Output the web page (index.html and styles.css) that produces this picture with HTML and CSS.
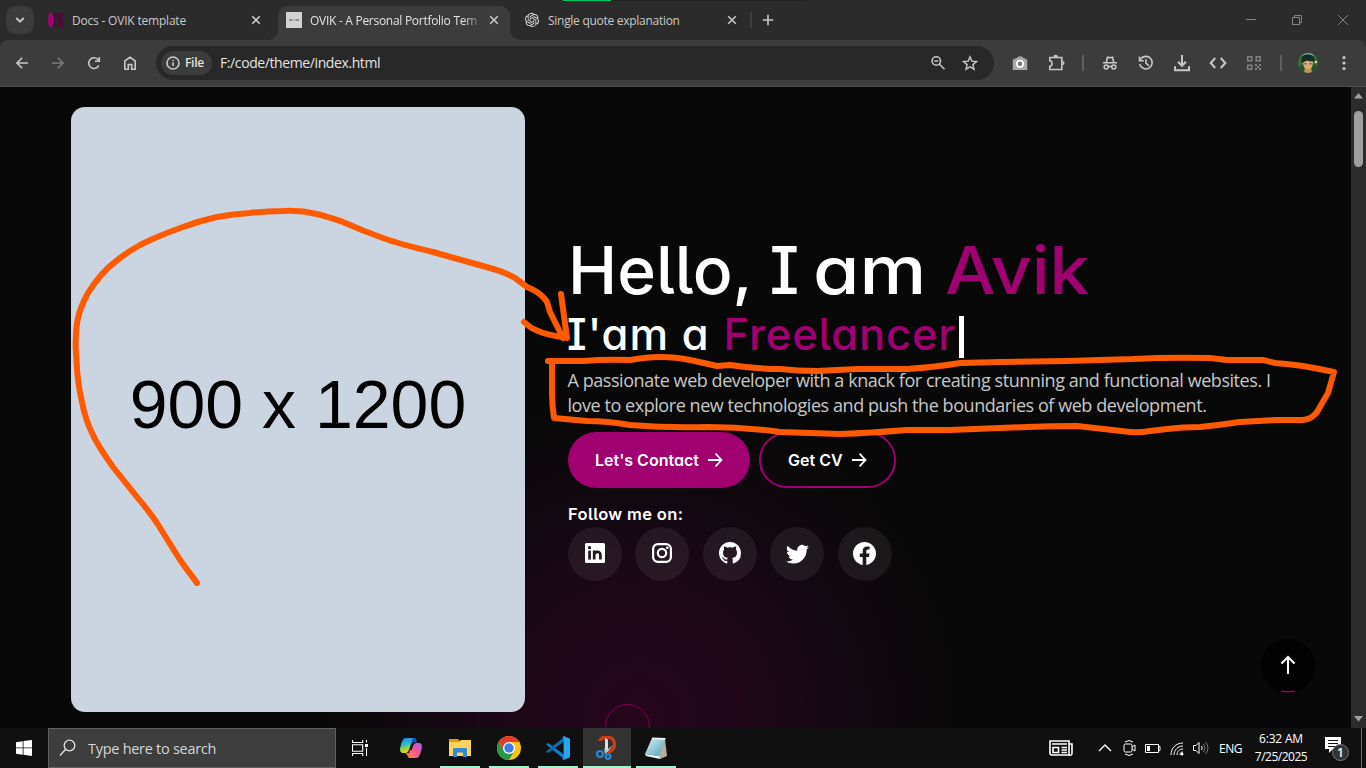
FILE: index.html
```html
<!DOCTYPE html>
<html lang="en">
<head>
<meta charset="utf-8">
<title>OVIK - A Personal Portfolio Template</title>
<link rel="stylesheet" href="styles.css">
</head>
<body>
<div class="screen">
  <header class="tabstrip">
    <button class="tab-search"><svg width="10" height="8" viewBox="0 0 10 8"><path class="ln2" d="M1.2 2 5 5.7 8.8 2"/></svg></button>
    <div class="tab tab-docs">
      <svg class="fav" width="16" height="16" viewBox="0 0 16 16"><ellipse cx="2.6" cy="8" rx="2.5" ry="7.8" fill="#a80074"/><path d="M5.6.5 7 14.500 8.300.5M10 .5v15M12.300.5v15M15.300.5l-2.300 7 2.300 8" fill="none" stroke="#4d0838" stroke-width="1.400"/></svg>
      <span class="tab-title t1">Docs - OVIK template</span>
      <svg class="x" width="10" height="10" viewBox="0 0 10 10"><path class="ln15" d="m1.2 1.2 7.6 7.6m0-7.6L1.2 8.8"/></svg>
    </div>
    <div class="tab tab-active">
      <svg class="fav" width="16" height="16" viewBox="0 0 16 16"><path fill="#d2d2d2" d="M0 0h16v16H0z"/><path d="M3 8h3.500m3 0H13" stroke="#777" stroke-width="1.600"/><path d="M7.300 8h1.400" stroke="#888"/></svg>
      <span class="tab-title t2">OVIK - A Personal Portfolio Tem</span>
      <svg class="x" width="10" height="10" viewBox="0 0 10 10"><path class="ln15" d="m1.2 1.2 7.6 7.6m0-7.6L1.2 8.8"/></svg>
    </div>
    <div class="tab tab-gpt">
      <svg class="fav" width="16" height="16" viewBox="-1.500 -1.500 27 27"><path fill="#dadada" d="M22.2819 9.8211a5.9847 5.9847 0 0 0-.5157-4.9108 6.0462 6.0462 0 0 0-6.5098-2.9A6.0651 6.0651 0 0 0 4.9807 4.1818a5.9847 5.9847 0 0 0-3.9977 2.9 6.0462 6.0462 0 0 0 .7427 7.0966 5.98 5.98 0 0 0 .511 4.9107 6.051 6.051 0 0 0 6.5146 2.9001A5.9847 5.9847 0 0 0 13.2599 24a6.0557 6.0557 0 0 0 5.7718-4.2058 5.9894 5.9894 0 0 0 3.9977-2.9001 6.0557 6.0557 0 0 0-.7475-7.0729zm-9.022 12.6081a4.4755 4.4755 0 0 1-2.8764-1.0408l.1419-.0804 4.7783-2.7582a.7948.7948 0 0 0 .3927-.6813v-6.7369l2.02 1.1686a.071.071 0 0 1 .038.052v5.5826a4.504 4.504 0 0 1-4.4945 4.4944zm-9.6607-4.1254a4.4708 4.4708 0 0 1-.5346-3.0137l.142.0852 4.783 2.7582a.7712.7712 0 0 0 .7806 0l5.8428-3.3685v2.3324a.0804.0804 0 0 1-.0332.0615L9.74 19.9502a4.4992 4.4992 0 0 1-6.1408-1.6464zM2.3408 7.8956a4.485 4.485 0 0 1 2.3655-1.9728V11.6a.7664.7664 0 0 0 .3879.6765l5.8144 3.3543-2.0201 1.1685a.0757.0757 0 0 1-.071 0l-4.8303-2.7865A4.504 4.504 0 0 1 2.3408 7.872zm16.5963 3.8558L13.1038 8.364 15.1192 7.2a.0757.0757 0 0 1 .071 0l4.8303 2.7913a4.4944 4.4944 0 0 1-.6765 8.1042v-5.6772a.79.79 0 0 0-.407-.667zm2.0107-3.0231l-.142-.0852-4.7735-2.7818a.7759.7759 0 0 0-.7854 0L9.409 9.2297V6.8974a.0662.0662 0 0 1 .0284-.0615l4.8303-2.7866a4.4992 4.4992 0 0 1 6.6802 4.66zM8.3065 12.863l-2.02-1.1638a.0804.0804 0 0 1-.038-.0567V6.0742a4.4992 4.4992 0 0 1 7.3757-3.4537l-.142.0805L8.704 5.459a.7948.7948 0 0 0-.3927.6813zm1.0976-2.3654l2.602-1.4998 2.6069 1.4998v2.9994l-2.5974 1.4997-2.6067-1.4997Z"/></svg>
      <span class="tab-title t3">Single quote explanation</span>
      <svg class="x" width="10" height="10" viewBox="0 0 10 10"><path class="ln15" d="m1.200 1.200 7.600 7.600m0-7.600L1.200 8.800"/></svg>
    </div>
    <i class="tab-sep"></i>
    <svg class="plus" width="12" height="12" viewBox="0 0 12 12"><path class="ln15" d="M6 .8v10.400M.8 6h10.400"/></svg>
    <div class="winctl">
      <svg width="46" height="40"><path d="M18 19.500h10"/></svg>
      <svg width="46" height="40"><path d="M18.500 17.500h7v7h-7zM20.500 17.500v-2h7v7h-2"/></svg>
      <svg width="46" height="40"><path d="m18 15 10 10m0-10L18 25"/></svg>
    </div>
    <i class="top-line"></i>
  </header>

  <nav class="toolbar">
    <span class="slot"><svg width="12" height="12" viewBox="0 0 12 12"><path class="ln" d="M12 6H1.200M6.200.8 1 6l5.200 5.200"/></svg></span>
    <span class="slot dim"><svg width="12" height="12" viewBox="0 0 12 12"><path class="ln" d="M0 6h10.800M5.800.8 11 6l-5.200 5.200"/></svg></span>
    <span class="slot"><svg width="16" height="16" viewBox="0 0 16 16"><path class="ln" d="M12.800 10.400A5.300 5.300 0 1 1 11.900 4.500L13.200 6"/><path class="ln" d="M13.300 2v4.300H9"/></svg></span>
    <span class="slot"><svg width="16" height="16" viewBox="0 0 16 16"><path class="ln" d="M2.800 14.200V6L8 2.200 13.200 6v8.200H9.700V9.500H6.300v4.700z"/></svg></span>
    <div class="omnibox">
      <span class="chip"><svg width="14" height="14" viewBox="0 0 14 14"><circle class="ln" cx="7" cy="7" r="6"/><path class="ln" d="M7 6.300V10M7 3.800v1.300"/></svg><b>File</b></span>
      <span class="url">F:/code/theme/index.html</span>
      <span class="omni-icons">
        <svg width="16" height="16" viewBox="0 0 16 16"><circle class="ln" cx="6.300" cy="6" r="4.200"/><path class="ln" d="M9.500 9.300 14.500 14.300M4.300 6h4"/></svg>
        <svg width="16" height="16" viewBox="0 0 16 16"><path class="ln13" d="m8 1.800 1.800 4.300 4.700.4-3.600 3.100 1.100 4.600L8 11.800l-4 2.400 1.100-4.600-3.600-3.100 4.700-.4z"/></svg>
      </span>
    </div>
    <div class="actions">
      <span class="slot"><svg width="16" height="16" viewBox="0 0 16 16"><path fill="#a8a8a8" d="M1 4.200h2.200V3h2l1-1.600h4L11.300 3H13v1.200h2.200V15H.8V4.200z"/><circle cx="8" cy="8.800" r="3.200" fill="#777" stroke="#fff" stroke-width="1.700"/></svg></span>
      <span class="slot"><svg width="18" height="18" viewBox="0 0 18 18"><path class="ln" d="M2.800 3.500h12v12h-12v-3.200c3-.3 3-5.300 0-5.600z"/><path class="fl" d="M6.500 3a2.200 2.200 0 0 1 4.400 0zM15.500 7a2 2 0 0 1 0 4.200z"/></svg></span>
      <i class="tb-sep"></i>
      <span class="slot"><svg width="16" height="16" viewBox="0 0 16 16"><path class="ln" d="M4.300 7 5.500 2.200l2.500.6 2.500-.6L11.700 7M1 7.800h14"/><circle class="ln" cx="4.200" cy="12" r="2"/><circle class="ln" cx="11.800" cy="12" r="2"/><path class="ln" d="M6.200 11.500h3.600"/></svg></span>
      <span class="slot"><svg width="16" height="16" viewBox="0 0 16 16"><path class="ln" d="M1.700 9a6.300 6.300 0 1 0 1-5L1.500 5.500"/><path class="ln" d="M1.500 1.500v4.300h4.300M8 4.300v4l3 2.300"/></svg></span>
      <span class="slot"><svg width="18" height="18" viewBox="0 0 18 18"><path class="ln2" d="M9 1v10.500M5 7.800l4 4 4-4M2 12.300v4h14v-4"/></svg></span>
      <span class="slot"><svg width="18" height="14" viewBox="0 0 18 14"><path class="ln2" d="M6.200 2 1.700 7l4.500 5M11.800 2l4.500 5-4.500 5"/></svg></span>
      <span class="slot"><svg width="16" height="16" viewBox="0 0 16 16"><path fill="none" stroke="#818181" stroke-width="1.500" d="M1.700 1.700h4v4h-4zM10.200 1.700h4v4h-4zM1.700 10.200h4v4h-4z"/><path fill="#818181" d="M9 9h2v2H9zM11 11h2v2h-2zM13 9h2v2h-2zM9 13h2v2H9zM13 13h2v2h-2z"/></svg></span>
      <i class="tb-sep"></i>
      <span class="slot"><svg width="20" height="20" viewBox="0 0 20 20"><defs><clipPath id="av"><circle cx="10" cy="10" r="10"/></clipPath></defs><g clip-path="url(#av)"><path fill="#3c7036" d="M0 0h20v20H0z"/><path fill="#78a8ac" d="M0 0h20v2.500H0z"/><path fill="#20562f" d="M0 14l5-3 3 9H0zM20 13l-5-2-2 9h7z"/><path fill="#c98f5c" d="M7 14h6l1 6H6z"/><ellipse cx="10" cy="10.500" rx="4.800" ry="5.600" fill="#dfab78"/><path fill="#152d27" d="M3.500 9.500C2.500 3 6 1.500 10 1.500s7.500 2 6.500 8L14.800 8 12 8.500l-3-1-4 2z"/><path stroke="#52301f" d="M6.500 10.800h2M11.500 10.800h2"/><circle cx="17.800" cy="9" r="1.300" fill="#e3d8a7"/></g></svg></span>
      <span class="slot"><svg width="4" height="16" viewBox="0 0 4 16"><circle class="fl" cx="2" cy="2.500" r="1.600"/><circle class="fl" cx="2" cy="8" r="1.600"/><circle class="fl" cx="2" cy="13.500" r="1.600"/></svg></span>
    </div>
  </nav>

  <div class="viewport">
    <main class="hero">
      <div class="photo">900 x 1200</div>
      <section class="intro">
        <h1><span>Hello,</span> <span>I</span> <span class="h1c">am</span> <span class="h1d pink">Avik</span></h1>
        <h2><span class="h2a">I'am a</span> <span class="pink h2b">Freelancer</span><i class="caret"></i></h2>
        <p class="bio">A passionate web developer with a knack for creating stunning and functional websites. I<br>love to explore new technologies and push the boundaries of web development.</p>
        <div class="buttons">
          <a class="btn primary"><span>Let's Contact</span><svg width="16" height="16" viewBox="0 0 16 16"><path d="M1 8h13M8.500 1.700 14.500 8l-6 6.300"/></svg></a>
          <a class="btn outline"><span>Get CV</span><svg width="16" height="16" viewBox="0 0 16 16"><path d="M1 8h13M8.500 1.700 14.500 8l-6 6.300"/></svg></a>
        </div>
        <div class="follow">Follow me on:</div>
        <div class="socials">
          <a><svg width="20" height="20" viewBox="0 0 20 20"><rect width="20" height="20" rx="1.500" fill="#fff"/><path fill="#24161f" d="M3.200 7.600h2.700v9H3.200z"/><circle cx="4.550" cy="4.700" r="1.650" fill="#24161f"/><path fill="none" stroke="#24161f" stroke-width="2.700" d="M9.200 7.600v9M9.200 12c0-3.800 6.200-4.500 6.200 0v4.600"/></svg></a>
          <a><svg width="20" height="20" viewBox="0 0 20 20"><g fill="none" stroke="#fff" stroke-width="2.200"><rect x="1.100" y="1.100" width="17.800" height="17.800" rx="4.800"/><circle cx="10" cy="10" r="4.200"/></g><circle cx="15.300" cy="4.700" r="1.300" fill="#fff"/></svg></a>
          <a><svg width="22" height="22" viewBox="0 0 16 16"><path fill="#fff" d="M8 0C3.580 0 0 3.580 0 8c0 3.540 2.290 6.530 5.470 7.590.4.070.55-.17.55-.38 0-.19-.01-.82-.01-1.490-2.010.37-2.530-.49-2.690-.94-.09-.23-.48-.94-.82-1.130-.28-.15-.68-.52-.01-.53.63-.01 1.080.58 1.230.82.72 1.210 1.870.87 2.330.66.070-.52.28-.87.51-1.070-1.780-.2-3.640-.89-3.640-3.950 0-.87.31-1.590.82-2.150-.08-.2-.36-1.020.08-2.120 0 0 .67-.21 2.200.82.64-.18 1.320-.27 2-.27s1.360.09 2 .27c1.530-1.040 2.200-.82 2.200-.82.44 1.100.16 1.920.08 2.120.51.56.82 1.270.82 2.150 0 3.070-1.870 3.750-3.650 3.950.29.25.54.73.54 1.480 0 1.070-.01 1.930-.01 2.200 0 .21.15.46.55.38A8.010 8.010 0 0 0 16 8c0-4.420-3.580-8-8-8z"/></svg></a>
          <a><svg width="23" height="23" viewBox="0 0 16 16"><path fill="#fff" d="M5.026 15c6.038 0 9.341-5.003 9.341-9.334 0-.14 0-.282-.006-.422A6.685 6.685 0 0 0 16 3.542a6.658 6.658 0 0 1-1.889.518 3.301 3.301 0 0 0 1.447-1.817 6.533 6.533 0 0 1-2.087.793A3.286 3.286 0 0 0 7.875 6.030a9.325 9.325 0 0 1-6.767-3.429 3.289 3.289 0 0 0 1.018 4.382A3.323 3.323 0 0 1 .64 6.575v.045a3.288 3.288 0 0 0 2.632 3.218 3.203 3.203 0 0 1-.865.115 3.230 3.230 0 0 1-.614-.057 3.283 3.283 0 0 0 3.067 2.277A6.588 6.588 0 0 1 .78 13.580a6.320 6.320 0 0 1-.78-.045A9.344 9.344 0 0 0 5.026 15z"/></svg></a>
          <a><svg width="23" height="23" viewBox="0 0 16 16"><path fill="#fff" d="M16 8.049c0-4.446-3.582-8.050-8-8.050C3.580 0-.002 3.603-.002 8.050c0 4.017 2.926 7.347 6.750 7.951v-5.625h-2.030V8.050H6.750V6.275c0-2.017 1.195-3.131 3.022-3.131.876 0 1.791.157 1.791.157v1.980h-1.009c-.993 0-1.303.621-1.303 1.258v1.510h2.218l-.354 2.326H9.250V16c3.824-.604 6.750-3.934 6.750-7.951z"/></svg></a>
        </div>
      </section>
      <i class="ring"></i>
      <a class="to-top"><svg width="54" height="54" viewBox="0 0 54 54"><path d="M27 35V19M20.500 24.500 27 18l6.500 6.500" fill="none" stroke="#fff" stroke-width="2"/><path d="M20 52.200q7 1 14 0" fill="none" stroke="#a00070" stroke-width="1.200"/></svg></a>
    </main>
    <aside class="scrollbar">
      <svg width="15" height="24"><path fill="#a0a0a0" d="M3 11.500 7.500 6 12 11.500z"/></svg>
      <i class="thumb"></i>
      <svg class="down" width="15" height="20"><path fill="#a0a0a0" d="M3 8 7.500 13.500 12 8z"/></svg>
    </aside>
  </div>

  <footer class="taskbar">
    <span class="start"><svg width="16" height="16" viewBox="0 0 16 16"><path fill="#fff" d="M0 2.200 6.700 1.200v6.300H0zM7.500 1.100 16 0v7.500H7.500zM0 8.300h6.700v6.400L0 13.700zM7.500 8.300H16V16l-8.500-1.200z"/></svg></span>
    <div class="search"><svg width="18" height="18" viewBox="0 0 18 18"><circle cx="10.500" cy="6.500" r="5.300"/><path d="M6.700 10.300 1 16.500"/></svg><span>Type here to search</span></div>
    <span class="start"><svg width="16" height="16" viewBox="0 0 16 16" fill="none" stroke="#fff" stroke-width="1.100"><path d="M.5 0v2.500h10.200V0M.5 16v-2.500h10.200V16M.5 4.800h10.200v6.400H.5zM14.500 0v2.500M14.500 8v8"/><path fill="#fff" stroke="none" d="M13 4h3v3h-3z"/></svg></span>
    <div class="apps">
      <span class="app"><svg width="24" height="24" viewBox="0 0 24 24"><defs><linearGradient id="c1" x2="0.300" y2="1"><stop stop-color="#1788e8"/><stop offset=".45" stop-color="#28b4d8"/><stop offset=".7" stop-color="#8bd13f"/><stop offset="1" stop-color="#f4d12a"/></linearGradient><linearGradient id="c2" x1="1" x2="0" y2="1"><stop stop-color="#a65cf2"/><stop offset=".5" stop-color="#f0588f"/><stop offset="1" stop-color="#ff8b42"/></linearGradient></defs><path fill="#1653ba" d="M12 2h3.500c1.700 0 2 2 2.500 4.500h-4L11 11z"/><path fill="url(#c1)" d="M7 2h8c-2 .5-2.500 3-3.500 7-1 4-2 8-5 8H4c-3 0-3.500-3-2.500-6.500C3 5 4 2 7 2z"/><path fill="#ff7053" d="M6 17c2 0 2.500 5 5 5h3l1-7-4-1-1 3z"/><path fill="url(#c2)" d="M17 22H9c2-.5 2.500-3 3.500-7 1-4 2-8 5-8H20c3 0 3.500 3 2.500 6.500C21 19 20 22 17 22z"/></svg></span>
      <span class="app run"><svg width="24" height="24" viewBox="0 0 24 24"><path fill="#e59b00" d="M1 3h9l2 2v4H1z"/><path fill="#ffd35c" d="M1 6h10l2-2h10v16H1z"/><path fill="#318bd3" d="M5 21v-8.500L6.500 12h11l1.500.5V21h-4v-4.500H9V21z"/></svg></span>
      <span class="app run"><svg width="24" height="24" viewBox="0 0 24 24"><circle cx="12" cy="12" r="12" fill="#fbc116"/><path fill="#e33b2e" d="M1.600 6A12 12 0 0 1 22.400 6H12L6.800 15z"/><path fill="#249a49" d="M1.600 6A12 12 0 0 0 12 24l5.200-9-5.200 3-5.200-3z"/><circle cx="12" cy="12" r="6" fill="#fff"/><circle cx="12" cy="12" r="4.700" fill="#3c7bea"/></svg></span>
      <span class="app run"><svg width="24" height="24" viewBox="0 0 24 24"><path fill="#0780cc" d="M0 8.500 2 7l16 11.500v4.500z"/><path fill="#086eaf" d="M0 15.500 2 17 18 5.500V1z"/><path fill="#27a7ee" d="M17.500 0 24 2.800v18.400L17.500 24 16 22.500c.8.500 1.600 0 1.600-1V2.500c0-1-.8-1.500-1.600-1z"/></svg></span>
      <span class="app run active"><svg width="24" height="24" viewBox="0 0 24 24"><path d="M5 4.500C8-.5 19-.5 19.500 8c.2 5-3.500 8-7 8.500" fill="none" stroke="#cd3c15" stroke-width="3.200"/><path fill="#cd3c15" d="M2.500 5 6.500.5 12 0 9 4z"/><path fill="#ddd" d="m10 2 3 1.500v11l-1.500 2.500-1.500-4zM18 9l-5.500 7-1.500-1z"/><path fill="#b7bec4" d="m9 12 4 3-3 3z"/><g fill="none" stroke="#2589d4" stroke-width="2.200"><circle cx="5" cy="18" r="3"/><circle cx="13" cy="20.500" r="2.400"/></g></svg></span>
      <span class="app run"><svg width="24" height="24" viewBox="0 0 24 24"><defs><linearGradient id="n" x2="1" y2="1"><stop stop-color="#d7f4f7"/><stop offset="1" stop-color="#4fa0b2"/></linearGradient></defs><path fill="#b8aea0" d="m21 3 2 17-7 3-3-4z"/><path fill="url(#n)" d="M8 2h13.500L15 20 1 18z"/><path fill="#e9f4f4" d="m1 18 14 2 1 3-14-3zM8 1.500l13.500.5-.5 2-13-1z"/></svg></span>
    </div>
    <div class="tray">
      <svg class="news" width="24" height="16" viewBox="0 0 24 16"><path d="M1 1h19v14H3a2 2 0 0 1-2-2zM20 4h3v9a2 2 0 0 1-3 2M3 4h15M12.500 7.500H18M12.500 10H18M12.500 12.500H18M4 7.500h5.500v5H4z" stroke-width="1.600"/></svg>
      <svg width="24" height="16" viewBox="0 0 24 16"><path d="m6 11 6-6 6 6" stroke-width="1.400"/></svg>
      <svg width="24" height="18" viewBox="0 0 24 18"><rect x="7" y="5" width="8" height="8" rx="1.500"/><path d="m15 8 3-2v6l-3-2M8 3q4-3 8 0M8 15q4 3 8 0"/></svg>
      <svg width="24" height="16" viewBox="0 0 24 16"><path d="M4.500 4.500h13v8h-13zM18 6.500h1v4h-1"/><path fill="#fff" stroke="none" d="M6 6h3v5H6z"/></svg>
      <svg width="24" height="16" viewBox="0 0 24 16"><path d="M6 15C6 8 11 3 18 3M9 15c0-5 4-9 9-9M12 15c0-3.500 2.500-6 6-6M15 15c0-2 1-3 3-3"/><circle cx="17" cy="14" r="1.500" fill="#fff" stroke="none"/></svg>
      <svg width="24" height="16" viewBox="0 0 24 16"><path d="M4.500 5.500H7l3-3v11l-3-3H4.500zM12.500 6q1.500 2 0 4"/><path d="M14.500 4q3 4 0 8M16.500 2q5 6 0 12" stroke="#777"/></svg>
      <span class="lang">ENG</span>
      <div class="clock"><span class="time">6:32 AM</span><span class="date">7/25/2025</span></div>
      <div class="notice"><svg width="26" height="26" viewBox="0 0 26 26"><path fill="#fff" stroke="none" d="M1 2h16v12H9l-4 4v-4H1z"/><path d="M4 5.500h10M4 8.500h10M4 11.500h7" stroke="#111"/><circle cx="16.500" cy="17.500" r="8" fill="#333" stroke="#777"/></svg><b>1</b></div>
      <i class="show-desk"></i>
    </div>
  </footer>

  <svg class="ink" width="1366" height="768" viewBox="0 0 1366 768">
    <path d="M197 583C190 573 183 565 177 555Q167 539 157 523C147 508 140 501 133 492L113 467C106 457 98 446 93 435C87 423 84 413 82 402C79 389 77 374 76.500 360C76 351 75.500 350 75.700 343C76 333 76 327 78 318C80 309 83 302 88 293C95 282 103 271 115 262C122 256 131 250 140 245Q160 235 183 227Q199 221 217 217Q233 214 250 213Q266 211 283 211Q300 210 317 214C326 216 334 219 343 222Q363 231 383 238C399 244 416 248 433 252L490 268Q505 272 515 278L527 287Q532 289 537 292Q544 297 547 302L550 312L563 338"/>
    <path d="M524 322Q530 328 538 331C547 335 555 336 567 338L561 294"/>
    <path d="M548 361L583 361Q607 359 630 360Q647 357 660 357Q676 357 690 360Q704 363 717 366L730 365Q755 369 780 369Q798 371 817 371Q837 370 857 369L907 369Q937 367 960 363L1000 362L1067 361L1133 359Q1170 357 1210 358L1227 360L1263 360L1275 363Q1289 364 1303 366Q1320 369 1334 372L1328 393L1317 412Q1312 419 1303 420L1277 420L1240 422Q1220 425 1200 427Q1183 427 1167 429L1150 431Q1140 433 1130 432Q1103 429 1077 426Q1051 426 1027 427L950 430L907 430Q870 433 840 434L780 432Q743 427 707 427Q667 428 630 425Q607 421 587 421L554 418Q552 405 552 393L552 362"/>
  </svg>
</div>
</body>
</html>
```
FILE: styles.css
```css
* { box-sizing: border-box; }
body { margin: 0; background: #080808; font-family: "Open Sans", "Noto Sans", sans-serif; color: #e3e3e3; }
i { font-style: normal; }
svg { display: block; flex: none; }
.screen { position: relative; width: 1366px; height: 768px; display: flex; flex-direction: column; overflow: hidden; }

.ln, .ln13, .ln15, .ln2 { fill: none; stroke: #c7c7c7; }
.ln { stroke-width: 1.6; }
.ln13 { stroke-width: 1.4; }
.ln15 { stroke-width: 1.6; }
.ln2 { stroke-width: 2; }
.fl { fill: #c7c7c7; }

.tabstrip { position: relative; height: 40px; background: #2b2b2b; display: flex; align-items: center; padding-left: 6px; }
.tab-search { width: 28px; height: 28px; border: 0; padding: 0; border-radius: 10px; background: #3c3c3c; display: flex; align-items: center; justify-content: center; }
.tab { display: flex; align-items: center; height: 34px; margin-top: 6px; padding-bottom: 6px; }
.tab-title { margin-left: 8px; font-size: 12px; white-space: nowrap; flex: 1; color: #c9c9c9; letter-spacing: -.2px; }
.tab-docs { width: 244px; padding-left: 14px; padding-right: 17px; }
.tab-active { position: relative; width: 232px; padding-left: 8px; padding-right: 11px; background: #3c3c3c; border-radius: 10px 10px 0 0; }
.tab-active::before, .tab-active::after { content: ""; position: absolute; bottom: 0; width: 10px; height: 10px; }
.tab-active::before { left: -10px; background: radial-gradient(circle at 0 0, transparent 9.5px, #3c3c3c 10px); }
.tab-active::after { right: -10px; background: radial-gradient(circle at 100% 0, transparent 9.5px, #3c3c3c 10px); }
.tab-active .tab-title { color: #e3e3e3; letter-spacing: -.28px; -webkit-mask-image: linear-gradient(90deg, #000 154px, transparent 173px); mask-image: linear-gradient(90deg, #000 154px, transparent 173px); }
.tab-gpt { width: 227px; padding-left: 14px; }
.tab-gpt .tab-title { letter-spacing: -.28px; }
.tab-sep { width: 2px; height: 16px; margin-left: 13px; background: #3f3f3f; }
.plus { margin-left: 10px; }
.winctl { margin-left: auto; display: flex; fill: none; stroke: #858585; stroke-width: 1; }
.top-line { position: absolute; left: 563px; top: 0; width: 241px; height: 1px; background: linear-gradient(90deg, #00c864 48px, #202020 48px); }

.toolbar { height: 47px; background: #3c3c3c; display: flex; align-items: center; padding: 0 4px 1px; border-bottom: 1px solid #505050; border-radius: 8px 8px 0 0; }
.screen::before { content: ""; position: absolute; top: 40px; left: 0; width: 100%; height: 20px; background: #2b2b2b; z-index: -1; }
.slot { width: 36px; display: flex; justify-content: center; flex: none; }
.dim { opacity: .45; }
.omnibox { width: 838px; height: 34px; margin-left: 8px; margin-right: 8px; border-radius: 17px; background: #282828; display: flex; align-items: center; padding-left: 5px; }
.chip { width: 51px; height: 24px; border-radius: 12px; background: #3c3c3c; display: flex; align-items: center; padding-left: 5px; gap: 5px; font-size: 12px; }
.chip b { font-weight: 600; letter-spacing: -.3px; }
.url { margin-left: 8px; font-size: 14px; letter-spacing: -.4px; }
.omni-icons { margin-left: auto; display: flex; gap: 16px; padding-right: 16px; }
.actions { display: flex; align-items: center; }
.tb-sep { width: 2px; height: 16px; margin: 0 8px; background: #5f5f5f; }

.viewport { height: 641px; display: flex; }
.hero { position: relative; width: 1351px; overflow: hidden; display: flex; padding: 20px 0 0 71px; background: radial-gradient(circle 345px at 640px 630px, #26061c 0, #200719 28%, #140812 58%, #0a0809 88%, #080808 100%) #080808; }
.photo { width: 454px; height: 605px; border-radius: 14px; background: #cbd5e1; color: #000; display: flex; align-items: center; justify-content: center; font: 68px "Liberation Sans", sans-serif; padding-bottom: 12px; }
.intro { margin-left: 43px; padding-top: 120px; width: 760px; }
h1, h2 { margin: 0; font-family: Inter, sans-serif; font-weight: 500; color: #fff; white-space: nowrap; font-feature-settings: "cv08", "cv11", "cv05"; }
h1 { font-size: 66px; line-height: 86px; }
.h1c, .h1d { display: inline-block; transform-origin: 0 50%; }
.h1c { margin-left: -4px; transform: scaleX(1.14); }
.h1d { margin-left: 15px; transform: scaleX(1.08); }
h2 { font-size: 43.5px; line-height: 54px; height: 50px; margin-top: -6px; display: flex; }
.pink { color: #a00070; }
.h2a { letter-spacing: 1px; margin-left: -1px; }
.h2b { margin-left: 14px; letter-spacing: .85px; }
.caret { width: 5px; height: 42px; margin: 9px 0 0 3px; background: #fff; }
.bio { margin: 11px 0 0 -.5px; font-size: 18px; line-height: 25px; letter-spacing: -.44px; color: #c7c7c7; white-space: nowrap; }
.buttons { display: flex; gap: 9px; margin-top: 14px; }
.btn { height: 56px; border-radius: 28px; display: flex; align-items: center; gap: 8px; color: #fff; font: 600 16px Inter, sans-serif; font-feature-settings: "cv11", "cv05"; }
.btn svg { fill: none; stroke: #fff; stroke-width: 1.8; }
.primary { width: 182px; padding-left: 27px; background: #a00070; }
.outline { width: 137px; padding-left: 27px; border: 2px solid #a00070; }
.follow { margin: 15px 0 1px; height: 23px; font: 600 16.5px/23px Inter, sans-serif; letter-spacing: .35px; color: #fff; font-feature-settings: "cv11", "cv05"; }
.socials { display: flex; gap: 13.4px; }
.socials a { width: 54px; height: 54px; border-radius: 50%; background: rgba(255,255,255,.065); display: flex; align-items: center; justify-content: center; padding-bottom: 2px; }
.ring { position: absolute; left: 605px; top: 617px; width: 45px; height: 45px; border: 1px solid #80005c; border-radius: 50%; }
.to-top { position: absolute; left: 1261px; top: 552px; width: 54px; height: 54px; border-radius: 50%; background: #020202; }
.scrollbar { width: 15px; background: #2c2c2c; display: flex; flex-direction: column; }
.thumb { width: 9px; height: 56px; margin-left: 3px; border-radius: 5px; background: #9f9f9f; }
.down { margin-top: auto; }

.taskbar { height: 40px; background: #101010; display: flex; }
.start { width: 48px; display: flex; align-items: center; justify-content: center; }
.search { width: 288px; border: 1px solid #616161; background: #3d3d3d; display: flex; align-items: center; padding-left: 10px; }
.search svg { fill: none; stroke: #e5e5e5; stroke-width: 1.3; }
.search span { margin-left: 11px; font-size: 14.5px; letter-spacing: -.28px; color: #d6d6d6; }
.apps { display: flex; gap: 1px; padding-left: 3px; }
.app { position: relative; width: 48px; display: flex; align-items: center; justify-content: center; }
.run::after { content: ""; position: absolute; left: 4px; right: 4px; bottom: 0; height: 2px; background: #a3f3cd; }
.active { background: #333; }
.active::after { left: 0; right: 0; }
.tray { margin-left: auto; width: 317px; display: flex; align-items: center; font-size: 12px; color: #fff; }
.tray svg { fill: none; stroke: #fff; stroke-width: 1; }
.news { margin-right: 20px; }
.lang { width: 35px; margin-right: 1px; text-align: center; letter-spacing: -.4px; }
.clock { width: 64px; margin-right: 2px; display: flex; flex-direction: column; align-items: center; line-height: 18px; }
.time { letter-spacing: -.2px; }
.date { letter-spacing: -.5px; }
.notice { position: relative; width: 28px; margin-left: 9px; }
.notice b { position: absolute; left: 13px; top: 9px; font-size: 12px; line-height: 17px; font-weight: 600; }
.show-desk { width: 1px; height: 40px; margin-left: auto; margin-right: 4px; background: #6e6e6e; }

.ink { position: absolute; left: 0; top: 0; fill: none; stroke: #ff5a00; stroke-width: 6; stroke-linecap: round; stroke-linejoin: round; pointer-events: none; }
```
